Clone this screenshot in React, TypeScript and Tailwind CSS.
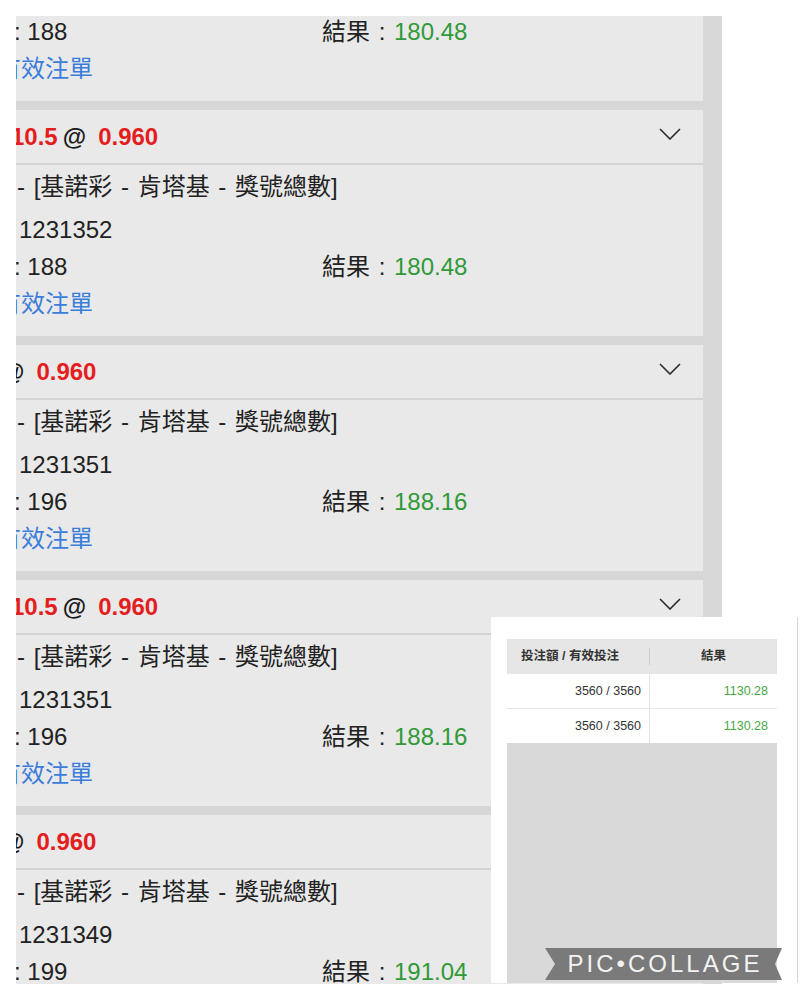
import React from 'react';

type Ticket = {
    odds: 'full' | 'short';
    id: string;
    bet: string;
    result: string;
};

const tickets: Ticket[] = [
    { odds: 'short', id: '1231353', bet: '188', result: '180.48' },
    { odds: 'full', id: '1231352', bet: '188', result: '180.48' },
    { odds: 'short', id: '1231351', bet: '196', result: '188.16' },
    { odds: 'full', id: '1231351', bet: '196', result: '188.16' },
    { odds: 'short', id: '1231349', bet: '199', result: '191.04' },
];

const summary = [
    { stake: '3560 / 3560', result: '1130.28' },
    { stake: '3560 / 3560', result: '1130.28' },
];

const Chevron = () => (
    <svg width="22" height="12" viewBox="0 0 22 12" className="mt-[18px] mr-[22px] shrink-0">
        <path d="M1 1L11 11L21 1" fill="none" stroke="#2b2b2b" strokeWidth="1.6" />
    </svg>
);

const TicketCard: React.FC<{ ticket: Ticket }> = ({ ticket }) => (
    <div>
        {/* Header */}
        <div className="flex justify-between items-start h-[55px] border-b-2 border-[#d3d3d3]">
            {ticket.odds === 'full' ? (
                <div className="flex leading-[53px] text-[24px] font-bold whitespace-nowrap">
                    <span className="-ml-[5px] text-[#e41e1e]">10.5</span>
                    <span className="ml-[5px] text-[#1c1c1c]">@</span>
                    <span className="ml-[12px] text-[#e41e1e]">0.960</span>
                </div>
            ) : (
                <div className="flex leading-[53px] text-[24px] font-bold whitespace-nowrap">
                    <span className="-ml-[15px] text-[#1c1c1c]">@</span>
                    <span className="ml-[12px] text-[#e41e1e]">0.960</span>
                </div>
            )}
            <Chevron />
        </div>

        {/* Body */}
        <div className="h-[171px] pt-[3px] text-[24px] text-[#222] whitespace-nowrap">
            <div className="h-[37px] leading-[37px] mb-[6px] ml-px [word-spacing:2px]">- [基諾彩 - 肯塔基 - 獎號總數]</div>
            <div className="h-[37px] leading-[37px] pl-[3px]">{ticket.id}</div>
            <div className="h-[37px] leading-[37px] flex -ml-[2px]">
                <span className="w-[308px] shrink-0">: {ticket.bet}</span>
                <span>結果</span>
                <span className="w-[24px] text-center">:</span>
                <span className="text-[#2f9a37]">{ticket.result}</span>
            </div>
            <div className="h-[37px] leading-[37px] -ml-[19px] text-[#3b7ddb]">有效注單</div>
        </div>

        <div className="h-[9px] bg-[#d7d7d7]" />
    </div>
);

export default function App() {
    return (
        <div className="relative w-[800px] h-[1000px] bg-white overflow-hidden pt-4 pl-4 font-['Liberation_Sans','Noto_Sans_CJK_TC',sans-serif]">
            {/* Betting record screenshot */}
            <div className="flex h-[968px] w-[706px]">
                <div className="w-[687px] overflow-hidden bg-[#e9e9e9]">
                    <div className="-mt-[141px]">
                        {tickets.map((t, i) => (
                            <TicketCard key={i} ticket={t} />
                        ))}
                    </div>
                </div>
                <div className="w-[19px] bg-[#d8d8d8]" />
            </div>

            {/* Summary screenshot */}
            <div className="absolute left-[491px] top-[617px] w-[307px] h-[366px] bg-white border-r border-[#d6d6d6] pl-4 pt-[22px]">
                <div className="w-[270px] text-[12.5px] text-[#333]">
                    <div className="flex items-center h-[35px] bg-[#e6e6e6] font-bold">
                        <div className="w-[142px] pl-[14px]">投注額 / 有效投注</div>
                        <div className="w-px h-[17px] bg-[#cdcdcd]" />
                        <div className="flex-1 text-center">結果</div>
                    </div>
                    {summary.map((row, i) => (
                        <div
                            key={i}
                            className={`flex ${i === 0 ? 'h-[35px] border-b border-[#e6e6e6]' : 'h-[34px]'}`}
                        >
                            <div className="w-[143px] border-r border-[#e3e3e3] flex items-center justify-end pr-[8px]">
                                {row.stake}
                            </div>
                            <div className="flex-1 flex items-center justify-end pr-[9px] text-[#45a845]">
                                {row.result}
                            </div>
                        </div>
                    ))}
                    <div className="relative h-[240px] bg-[#d9d9d9]">
                        <div className="absolute left-[38px] top-[205px] w-[237px] h-[32px] bg-[#7a7a7a] [clip-path:polygon(0_0,100%_0,calc(100%-7px)_50%,100%_100%,0_100%,10px_50%)] flex items-center justify-center">
                            <span className="text-[24px] leading-none tracking-[3px] text-[#f3f3f3] font-medium pl-[3px]">
                                PIC•COLLAGE
                            </span>
                        </div>
                    </div>
                </div>
            </div>
        </div>
    );
}
